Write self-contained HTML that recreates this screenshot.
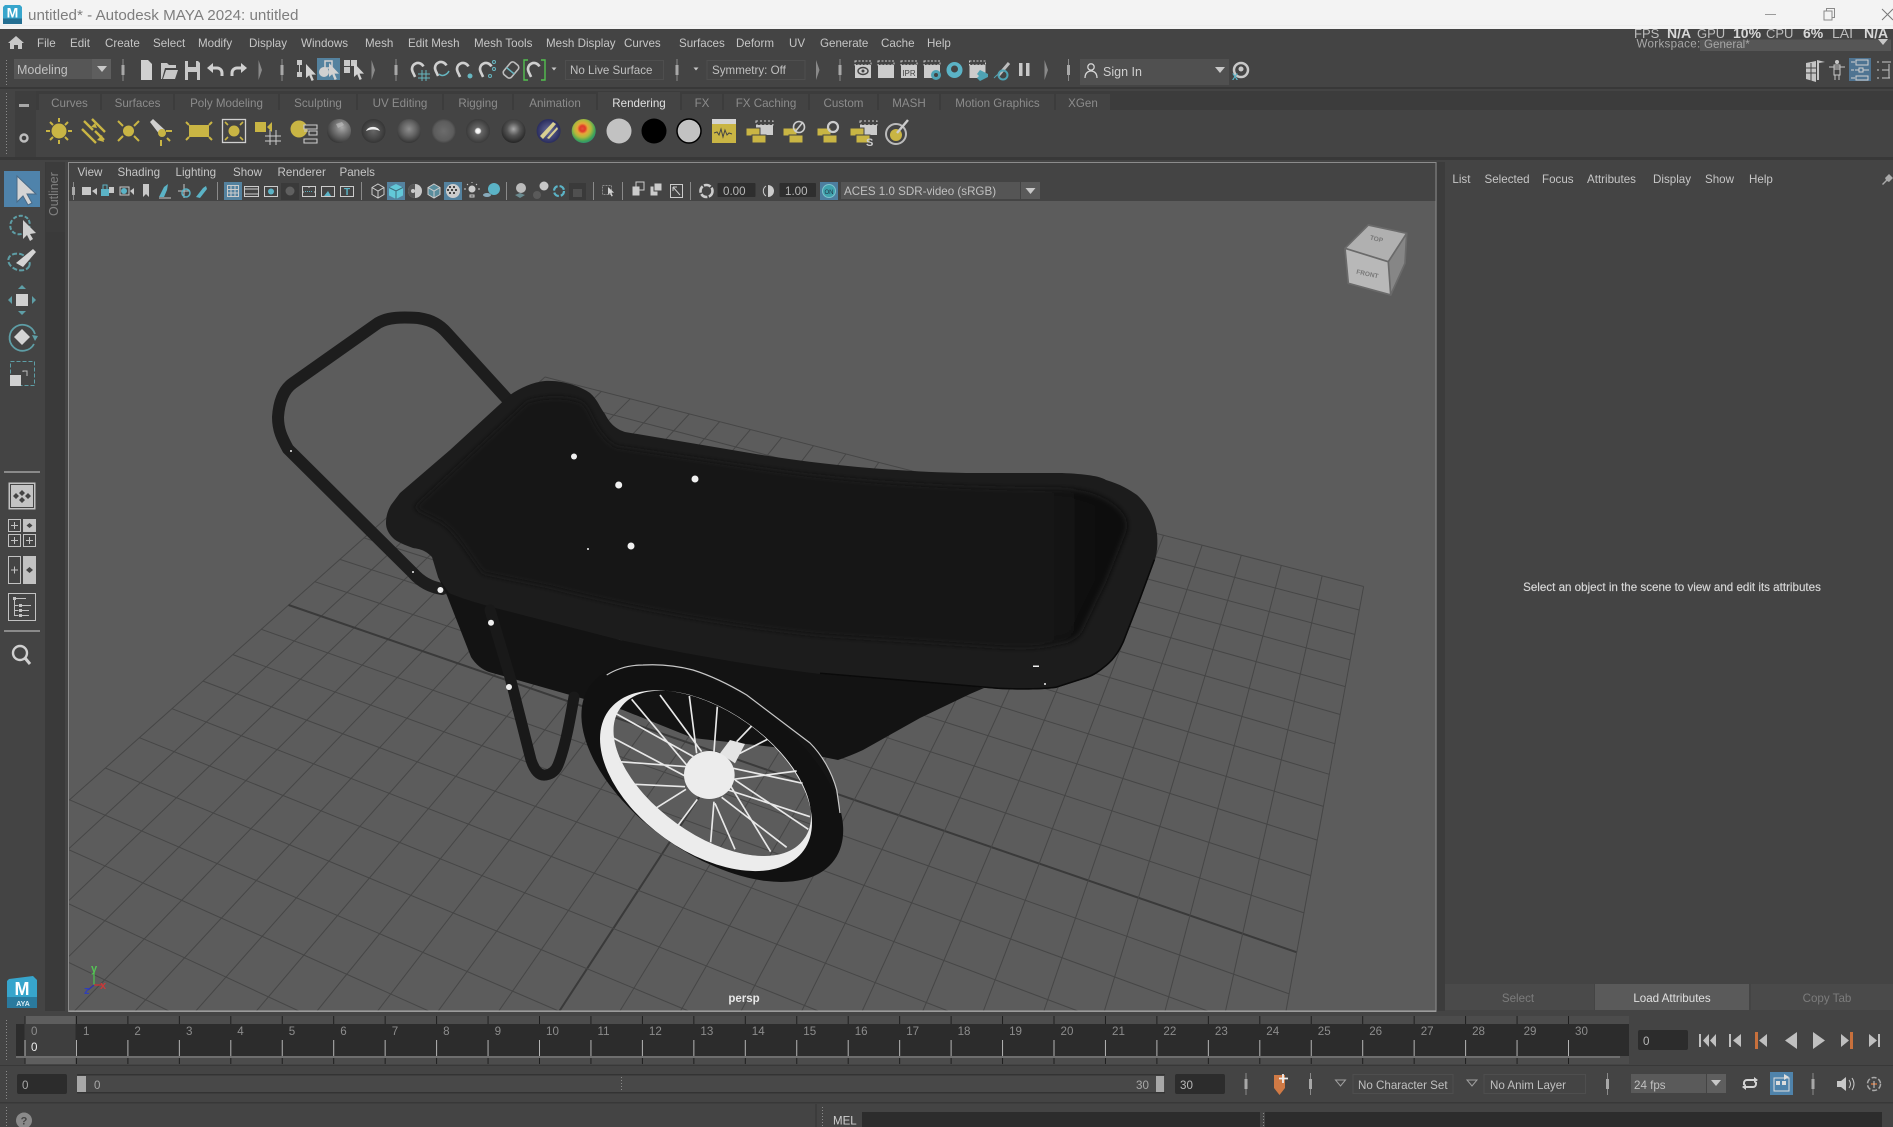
<!DOCTYPE html>
<html><head><meta charset="utf-8"><title>untitled* - Autodesk MAYA 2024: untitled</title>
<style>
html,body{margin:0;padding:0;background:#444;overflow:hidden;width:1893px;height:1127px}
svg{display:block}
text{font-family:"Liberation Sans",sans-serif;font-size:11.6px}
.m{fill:#c6c6c6}.d{fill:#8c8c8c}.b{fill:#bdbdbd}
.tc{text-anchor:middle}
</style></head><body>
<svg xmlns="http://www.w3.org/2000/svg" width="1893" height="1127" viewBox="0 0 1893 1127">
<defs>
<clipPath id="vp"><rect x="69" y="201" width="1367" height="810"/></clipPath>
<clipPath id="rimc"><path d="M545 381C562 380 580 386 590 393C598 400 600 408 605 414C610 424 616 429 625 432L750 453C820 465 900 472 966 473L1062 473C1085 474 1100 476 1106 480C1120 484 1130 490 1137 495C1148 505 1155 518 1157 534C1158 545 1157 552 1155 560L1141 598L1124 642C1118 655 1112 662 1104 668C1098 673 1092 677 1084 679L1056 688C1040 690 1020 690 998 689L820 674C760 667 690 655 620 640L503 610C480 604 460 598 449 593L438 577L432 557C425 550 420 549 413 548C405 545 397 542 393 538C388 533 386 528 386 523C386 516 388 510 391 505L400 493L450 450L510 395C520 388 533 382 545 381Z"/></clipPath>
<filter id="bl2" x="-10%" y="-10%" width="120%" height="120%"><feGaussianBlur stdDeviation="3"/></filter>
<filter id="bl1" x="-10%" y="-10%" width="120%" height="120%"><feGaussianBlur stdDeviation="1"/></filter>
<pattern id="tickL" patternUnits="userSpaceOnUse" x="24.5" y="0" width="51.45" height="20"><rect width="1" height="20" fill="#b4b4b4"/></pattern>
<pattern id="tickD" patternUnits="userSpaceOnUse" x="24.5" y="0" width="51.45" height="20"><rect width="1" height="20" fill="#1e1e1e"/></pattern>
<pattern id="dots" patternUnits="userSpaceOnUse" width="3" height="3"><rect width="1" height="1" fill="#8a8a8a"/></pattern>
<radialGradient id="s1" cx=".62" cy=".35" r=".7"><stop offset="0" stop-color="#aaa"/><stop offset=".4" stop-color="#777"/><stop offset="1" stop-color="#333"/></radialGradient>
<radialGradient id="s2" cx=".5" cy=".5" r=".6"><stop offset="0" stop-color="#666"/><stop offset="1" stop-color="#2c2c2c"/></radialGradient>
<radialGradient id="s3" cx=".5" cy=".42" r=".62"><stop offset="0" stop-color="#8e8e8e"/><stop offset=".5" stop-color="#626262"/><stop offset="1" stop-color="#2e2e2e"/></radialGradient>
<radialGradient id="s4" cx=".5" cy=".5" r=".58"><stop offset="0" stop-color="#6c6c6c"/><stop offset=".7" stop-color="#5c5c5c"/><stop offset="1" stop-color="#363636"/></radialGradient>
<radialGradient id="s5" cx=".5" cy=".5" r=".6"><stop offset="0" stop-color="#fff"/><stop offset=".16" stop-color="#eee"/><stop offset=".25" stop-color="#666"/><stop offset="1" stop-color="#2e2e2e"/></radialGradient>
<radialGradient id="s6" cx=".5" cy=".42" r=".6"><stop offset="0" stop-color="#a8a8a8"/><stop offset=".45" stop-color="#555"/><stop offset="1" stop-color="#222"/></radialGradient>
<radialGradient id="s7" cx=".5" cy=".5" r=".6"><stop offset="0" stop-color="#6a6e9a"/><stop offset="1" stop-color="#1c1f52"/></radialGradient>
<radialGradient id="s8" cx=".45" cy=".4" r=".65"><stop offset="0" stop-color="#e4503a"/><stop offset=".18" stop-color="#e03a28"/><stop offset=".34" stop-color="#e6a63a"/><stop offset=".55" stop-color="#b0b83c"/><stop offset=".8" stop-color="#3fa45a"/><stop offset="1" stop-color="#2a8a7a"/></radialGradient>
<linearGradient id="basin" gradientUnits="userSpaceOnUse" x1="415" y1="0" x2="1128" y2="0"><stop offset="0" stop-color="#121212"/><stop offset=".2" stop-color="#131313"/><stop offset=".3" stop-color="#191919"/><stop offset=".6" stop-color="#171717"/><stop offset=".85" stop-color="#121212"/><stop offset="1" stop-color="#111"/></linearGradient>
<g id="hs"><rect x="-.5" y="-11" width="1" height="22" fill="#8a8a8a"/><rect x="-1.5" y="-5" width="3" height="10" fill="#a8a8a8"/></g>
<path id="tri" d="M-1.5-10V10L2 0Z" fill="#8a8a8a"/>
<path id="cur" d="M0-8V6l3.2-2.8L5.6 9l2.2-1-2.3-5.4H10Z" fill="#d2d2d2"/>
<g id="mag"><path d="M-6 6V0a6 6 0 0 1 12 0" fill="none" stroke="#cfcfcf" stroke-width="2.6" transform="rotate(-25)"/></g>
<path id="dn" d="M-5-3H5L0 3Z" fill="#c8c8c8"/>
<path id="dno" d="M-5-3H5L0 3Z" fill="none" stroke="#a0a0a0"/>
<g id="stk"><rect x="-12" y="-3" width="14" height="8" fill="#c9b544" stroke="#444"/><rect x="-6" y="4" width="14" height="8" fill="#c9b544" stroke="#444"/></g>
<g id="clap"><rect x="-2" y="-10" width="17" height="4" fill="none" stroke="#ccc" stroke-dasharray="2 2"/><rect x="-2" y="-6" width="17" height="10" fill="#ccc"/></g>
<g id="clp"><rect x="-8" y="-10" width="16" height="4" fill="#444" stroke="#ccc" stroke-dasharray="2 1.5"/><rect x="-8" y="-6" width="16" height="13" fill="#ccc"/></g>
</defs>

<rect width="1893" height="1127" fill="#444"/>

<!-- HUD -->
<text x="1634" y="38" style="font-size:13px" fill="#bdbdbd">FPS</text><text x="1667" y="38" style="font-size:14px;font-weight:bold" fill="#d8d8d8">N/A</text>
<text x="1697" y="38" style="font-size:13px" fill="#bdbdbd">GPU</text><text x="1733" y="38" style="font-size:14px;font-weight:bold" fill="#d8d8d8">10%</text>
<text x="1766" y="38" style="font-size:13px" fill="#bdbdbd">CPU</text><text x="1803" y="38" style="font-size:14px;font-weight:bold" fill="#d8d8d8">6%</text>
<text x="1832" y="38" style="font-size:14px" fill="#bdbdbd">LAI</text><text x="1864" y="38" style="font-size:14px;font-weight:bold" fill="#d8d8d8">N/A</text>

<!-- Title bar -->
<rect width="1893" height="29" fill="#f3f3f3"/><rect y="25" width="1893" height="1" fill="#ededed"/>
<g transform="translate(3,5)"><path d="M2 0H17L19 2V19H0V2Z" fill="#37a5cc"/><rect y="13.500" width="19" height="5.500" fill="#256f92"/><text x="9.500" y="12.500" class="tc" style="font-size:14px;font-weight:bold" fill="#fff">M</text></g>
<text x="28" y="20" style="font-size:15.2px" fill="#7e7e7e">untitled* - Autodesk MAYA 2024: untitled</text>
<path d="M1765 14.500h11" stroke="#9a9a9a"/>
<path d="M1824 11h8v9h-8zM1826.500 11V8.500h8v9h-2.500" fill="none" stroke="#8a8a8a"/>
<path d="M1882 9l11 11M1893 9l-11 11" stroke="#777" fill="none"/>

<!-- Menu bar -->
<path d="M8 43l8-7 8 7h-2v6h-4v-4h-4v4h-4v-6z" fill="#c8c8c8"/>
<text class="m" x="37" y="47">File</text><text class="m" x="70" y="47">Edit</text><text class="m" x="105" y="47">Create</text><text class="m" x="153" y="47">Select</text><text class="m" x="198" y="47">Modify</text><text class="m" x="249" y="47">Display</text><text class="m" x="301" y="47">Windows</text><text class="m" x="365" y="47">Mesh</text><text class="m" x="408" y="47">Edit Mesh</text><text class="m" x="474" y="47">Mesh Tools</text><text class="m" x="546" y="47">Mesh Display</text><text class="m" x="624" y="47">Curves</text><text class="m" x="679" y="47">Surfaces</text><text class="m" x="736" y="47">Deform</text><text class="m" x="789" y="47">UV</text><text class="m" x="820" y="47">Generate</text><text class="m" x="881" y="47">Cache</text><text class="m" x="927" y="47">Help</text>
<rect x="1700" y="39.500" width="191" height="11.500" fill="#565656"/>
<text x="1636.500" y="47.500" fill="#a8a8a8" style="letter-spacing:.3px">Workspace:</text>
<text x="1704" y="48" fill="#a8a8a8">General*</text>
<use href="#dn" x="1883" y="42"/>

<!-- Status toolbar -->
<rect x="4" y="59" width="3" height="26" fill="url(#dots)"/>
<rect x="14" y="59" width="97" height="20" fill="#565656"/><rect x="92" y="59" width="19" height="20" fill="#5e5e5e"/>
<text x="17" y="74" style="font-size:12.500px" fill="#c0c0c0">Modeling</text><use href="#dn" x="102" y="69"/>
<use href="#hs" x="123" y="70"/>
<path d="M141 60h7l4 4v16h-11z" fill="#d0d0d0"/>
<path d="M161 79V63h6l2 2h7v3h-11l-3 11zM163 79l3-9h12l-3 9z" fill="#c8c8c8"/>
<path d="M185 61h13l2 2v17h-15z" fill="#c8c8c8"/><rect x="188" y="61" width="8" height="6" fill="#444"/><rect x="188" y="72" width="9" height="8" fill="#444"/>
<path d="M222 76v-3a5 5 0 0 0-5-5h-7" fill="none" stroke="#d0d0d0" stroke-width="3"/><path d="M207 68l6-5v10z" fill="#d0d0d0"/>
<path d="M232 76v-3a5 5 0 0 1 5-5h7" fill="none" stroke="#d0d0d0" stroke-width="3"/><path d="M247 68l-6-5v10z" fill="#d0d0d0"/>
<use href="#tri" x="260" y="70"/><use href="#hs" x="282" y="70"/>
<g fill="#c8c8c8"><rect x="297" y="60" width="5" height="5"/><rect x="297" y="72" width="5" height="5"/><path d="M299 65h1v7h-1z"/></g><use href="#cur" x="306" y="72"/>
<rect x="317" y="58" width="23" height="22" fill="#54829f"/><circle cx="324" cy="72" r="5" fill="#d0d0d0"/><rect x="325" y="61" width="7" height="7" fill="none" stroke="#d0d0d0" stroke-width="1.500"/><use href="#cur" x="329" y="71"/>
<g fill="#c8c8c8"><rect x="344" y="60" width="6" height="6"/><rect x="351" y="60" width="6" height="6"/><rect x="344" y="67" width="6" height="6"/></g><use href="#cur" x="354" y="71"/>
<use href="#tri" x="373" y="70"/><use href="#hs" x="396" y="70"/>
<use href="#mag" x="418" y="69"/><path d="M422 70v11M426 70v11M418 74h12M418 78h12" stroke="#66b6c0" fill="none"/>
<use href="#mag" x="441" y="68"/><path d="M439 74c3 3 8 1 10-3" stroke="#66b6c0" fill="none" stroke-width="1.500"/>
<use href="#mag" x="463" y="69"/><circle cx="470" cy="76" r="2.500" fill="#66b6c0"/>
<use href="#mag" x="486" y="69"/><g fill="none" stroke="#66b6c0"><circle cx="494" cy="62" r="1.500"/><circle cx="494" cy="69" r="1.500"/><circle cx="490" cy="76" r="1.500"/></g>
<g transform="translate(511,70) rotate(40)"><rect x="-5" y="-8" width="10" height="16" rx="3" fill="none" stroke="#bdbdbd" stroke-width="1.600"/><path d="M-5 1h10" stroke="#66b6c0" stroke-width="1.500"/></g>
<path d="M528 60h-4v20h4M541 60h4v20h-4" fill="none" stroke="#53c04f" stroke-width="1.400"/><use href="#mag" x="534" y="69"/>
<path d="M551.500 67.500h5l-2.500 3z" fill="#c8c8c8"/>
<rect x="565.500" y="60.500" width="98" height="19" fill="none" stroke="#4e4e4e"/><text x="570" y="74" fill="#c0c0c0">No Live Surface</text>
<use href="#hs" x="677" y="70"/><path d="M693.500 67.500h5l-2.500 3z" fill="#c8c8c8"/>
<rect x="707" y="60.500" width="98" height="19" fill="none" stroke="#4e4e4e"/><text x="712" y="74" fill="#c0c0c0">Symmetry: Off</text>
<use href="#tri" x="817.500" y="70"/><use href="#hs" x="840" y="70"/>
<use href="#clp" x="863" y="71"/><ellipse cx="863" cy="71" rx="5" ry="3.500" fill="none" stroke="#444" stroke-width="1.400"/><circle cx="863" cy="71" r="1.500" fill="#444"/>
<use href="#clp" x="886" y="71"/>
<use href="#clp" x="909" y="71"/><text x="909" y="76" class="tc" style="font-size:8px" fill="#444">IPR</text>
<use href="#clp" x="932" y="71"/><circle cx="936" cy="75" r="5" fill="#4ea3b4"/><circle cx="936" cy="75" r="2" fill="#444"/>
<circle cx="954.500" cy="70" r="8" fill="#5bb3c6"/><circle cx="954.500" cy="69" r="3.500" fill="#444"/>
<use href="#clp" x="977.500" y="71"/><path d="M980 70l8 4v3l-8 4-3-3 2-2-2-2z" fill="#4ea3b4"/>
<path d="M998 76l11-13" stroke="#bdbdbd" stroke-width="3"/><circle cx="1003" cy="75" r="4.500" fill="none" stroke="#4ea3b4" stroke-width="2"/><path d="M994 78l3-3" stroke="#4ea3b4"/>
<rect x="1019" y="63" width="3.500" height="13" fill="#c8c8c8"/><rect x="1026" y="63" width="3.500" height="13" fill="#c8c8c8"/>
<use href="#tri" x="1046" y="70"/><use href="#hs" x="1068.500" y="70"/>
<rect x="1080" y="59" width="149" height="26" fill="#505050"/>
<circle cx="1091" cy="67" r="3.200" fill="none" stroke="#d4d4d4" stroke-width="1.300"/><path d="M1085 78c0-5 3-7 6-7s6 2 6 7" fill="none" stroke="#d4d4d4" stroke-width="1.300"/>
<text x="1103" y="76" style="font-size:12.500px" fill="#cfcfcf">Sign In</text><use href="#dn" x="1220" y="70"/>
<circle cx="1241" cy="70" r="7" fill="none" stroke="#c8c8c8" stroke-width="2.500"/><circle cx="1241" cy="69" r="2.500" fill="#c8c8c8"/><text x="1232" y="80" style="font-size:9px;font-weight:bold" fill="#5bb3c6">X</text>
<g fill="#c4c4c4"><path d="M1806 63l10-2v21l-10-3zM1817 60l8 2-6 1v17h-2z"/></g>
<path d="M1806 68h10M1806 73h10M1811 63v18" stroke="#444"/>
<g fill="none" stroke="#c8c8c8"><circle cx="1837" cy="62" r="1.500" fill="#c8c8c8"/><path d="M1829 67h16M1834 65h6v10h-6zM1835 75v5M1839 75v5M1834 69h6"/></g>
<rect x="1849" y="58" width="22" height="23" fill="#4f7492"/>
<g fill="none" stroke="#d0d0d0"><path d="M1851 62h4M1856 60h12v5h-12zM1851 70h3M1855 70h4M1863 70h6M1859 68h4v4h-4zM1851 78h4M1856 76h12v4h-12z"/></g>
<g fill="none" stroke="#c8c8c8"><path d="M1877 62h2M1882 62h9M1877 70h2M1882 70h7M1877 78h2M1882 78h8M1889 64v14"/></g>
<rect y="87" width="1893" height="2" fill="#383838"/>

<!-- Tabs and shelf -->
<rect x="4" y="92" width="3" height="62" fill="url(#dots)"/>
<rect x="15" y="91" width="1878" height="19" fill="#3c3c3c"/>
<rect x="15" y="91" width="21" height="66" fill="#3e3e3e"/>
<rect x="36" y="110" width="1857" height="47" fill="#444"/>
<rect x="19" y="104" width="10" height="3" fill="#a8a8a8"/>
<circle cx="24" cy="138" r="3.500" fill="none" stroke="#bdbdbd" stroke-width="2.400"/>
<g fill="#434343">
<rect x="39" y="94" width="61" height="16"/><rect x="102" y="94" width="71" height="16"/><rect x="175" y="94" width="103" height="16"/><rect x="280" y="94" width="76" height="16"/><rect x="358" y="94" width="84" height="16"/><rect x="444" y="94" width="68" height="16"/><rect x="514" y="94" width="82" height="16"/><rect x="682" y="94" width="40" height="16"/><rect x="724" y="94" width="84" height="16"/><rect x="810" y="94" width="67" height="16"/><rect x="879" y="94" width="60" height="16"/><rect x="941" y="94" width="113" height="16"/><rect x="1056" y="94" width="54" height="16"/>
</g>
<rect x="598" y="92" width="82" height="18" fill="#444"/>
<text class="d tc" x="69.500" y="107">Curves</text><text class="d tc" x="137.500" y="107">Surfaces</text><text class="d tc" x="226.500" y="107">Poly Modeling</text><text class="d tc" x="318" y="107">Sculpting</text><text class="d tc" x="400" y="107">UV Editing</text><text class="d tc" x="478" y="107">Rigging</text><text class="d tc" x="555" y="107">Animation</text><text class="d tc" x="702" y="107">FX</text><text class="d tc" x="766" y="107">FX Caching</text><text class="d tc" x="843.500" y="107">Custom</text><text class="d tc" x="909" y="107">MASH</text><text class="d tc" x="997.500" y="107">Motion Graphics</text><text class="d tc" x="1083" y="107">XGen</text>
<text x="639" y="107" class="tc" fill="#e0e0e0">Rendering</text>

<!-- shelf icons -->
<g fill="#c9b544" stroke="none">
<circle cx="59" cy="131" r="7.500"/><g stroke="#c9b544" stroke-width="2" fill="none"><path d="M59 118v4M59 140v4M46 131h4M68 131h4M50 122l3 3M65 137l3 3M68 122l-3 3M53 137l-3 3"/></g>
<g stroke="#c9b544" stroke-width="2.400" fill="none"><path d="M84 121l9 9M82 129l14 14M92 119l13 13M95 131l9 9"/></g><path d="M104 142l-7-2 5-5zM97 128l-6-1 4-4z"/>
<circle cx="128.500" cy="131" r="5.500"/><g stroke="#c9b544" stroke-width="2" fill="none"><path d="M118 121l5 5M134 136l5 5M139 121l-5 5M123 136l-5 5"/></g>
<path d="M153 119l12 11-5 5-10-13z" fill="#d0d0d0"/><path d="M166 131h6M161 140v6M167 138l3 3" stroke="#c9b544" stroke-width="2" fill="none"/><circle cx="162" cy="133" r="4"/>
<rect x="189" y="125" width="20" height="12"/><g stroke="#c9b544" stroke-width="2" fill="none"><path d="M186 122l3 3M212 122l-3 3M186 140l3-3M212 140l-3-3"/></g>
<rect x="222.500" y="119.500" width="23" height="23" fill="none" stroke="#d0d0d0" stroke-width="1.300"/><circle cx="234" cy="131" r="5.500"/><g stroke="#c9b544" stroke-width="1.600" fill="none"><path d="M225 122l3 3M243 122l-3 3M225 140l3-3M243 140l-3-3"/></g>
<path d="M255 122h11v10h-11zM267 127l5-5v10z"/><path d="M270 130v15M265 136h16M265 141h16M276 130v15" stroke="#ccc" fill="none"/>
<circle cx="299" cy="129" r="8.500"/><path d="M304 125h13v4h-13zM304 131h4M309 131h8v4h-8zM304 139h13v4h-13z" fill="#444" stroke="#ccc" stroke-width="1.100"/>
</g>
<circle cx="339" cy="131" r="12" fill="url(#s1)"/><path d="M336 124l6-2 2 3-6 3z" fill="#bbb" opacity=".7"/>
<circle cx="373.500" cy="131" r="12" fill="url(#s2)"/><path d="M366 131c2-5 11-6 14 0-4-2-10-2-14 0z" fill="#eee"/>
<circle cx="409" cy="131" r="12" fill="url(#s3)"/>
<circle cx="443.700" cy="131" r="12" fill="url(#s4)"/>
<circle cx="478" cy="131" r="12" fill="url(#s5)"/>
<circle cx="513.500" cy="131" r="12" fill="url(#s6)"/>
<circle cx="548.600" cy="131" r="12" fill="url(#s7)"/><path d="M540 136l13-14 3 2-13 15z" fill="#d8cf92"/><path d="M547 138l10-11 1 2-9 10z" fill="#d8cf92"/>
<circle cx="583.700" cy="131" r="12" fill="url(#s8)"/>
<circle cx="619" cy="131" r="12.500" fill="#c2c2c2"/>
<circle cx="654" cy="131" r="12.500" fill="#000"/>
<circle cx="689" cy="131" r="12" fill="#c2c2c2" stroke="#000" stroke-width="1.500"/>
<rect x="712" y="119" width="24" height="24" fill="#c9b544"/><rect x="712" y="119" width="24" height="5" fill="#d4d4d4"/><path d="M714 133l3-1 2 3 2-6 2 8 2-7 2 5 2-2 3 1" fill="none" stroke="#444"/>
<use href="#clap" x="758" y="131"/><use href="#stk" x="758" y="131"/>
<use href="#stk" x="795" y="131"/><circle cx="799" cy="127" r="5.500" fill="none" stroke="#ccc" stroke-width="1.600"/><path d="M795 132l8-10" stroke="#ccc" stroke-width="1.600"/>
<use href="#stk" x="829" y="131"/><circle cx="833" cy="127" r="5" fill="none" stroke="#ccc" stroke-width="2.200"/>
<use href="#clap" x="862" y="131"/><use href="#stk" x="862" y="131"/><text x="866" y="146" style="font-size:11px;font-weight:bold" fill="#ccc">S</text>
<circle cx="896" cy="134" r="10" fill="none" stroke="#bbb" stroke-width="2"/><circle cx="896" cy="135" r="6" fill="#c9b544"/><path d="M897 133l11-13" stroke="#ccc" stroke-width="2.400"/>
<rect y="157" width="1893" height="3" fill="#383838"/>

<!-- Left toolbox -->
<rect x="3" y="163" width="38" height="2" fill="url(#dots)"/>
<rect x="4" y="171" width="36" height="36" fill="#4f83ab"/>
<path d="M17 176v26l6-6 5 9 4-2-5-9h9z" fill="#d4d4d4" stroke="#4a6a86"/>
<ellipse cx="20" cy="225" rx="10" ry="9" fill="none" stroke="#5e9ea6" stroke-width="2" stroke-dasharray="4 2" transform="rotate(-30 20 225)"/>
<path d="M23 220v19l4-4 3 6 3-2-3-5 6-1z" fill="#d0d0d0"/>
<ellipse cx="19" cy="262" rx="11" ry="8" fill="none" stroke="#5e9ea6" stroke-width="2" stroke-dasharray="5 2" transform="rotate(20 19 262)"/>
<path d="M16 263l17-14 3 3-13 15z" fill="#d4d4d4"/>
<rect x="16" y="294" width="12" height="12" fill="#d0d0d0"/>
<path d="M22 285l4 4h-8zM22 315l4-4h-8zM8 300l4-4v8zM36 300l-4-4v8z" fill="#5e9ea6"/>
<path d="M34 344a13 13 0 1 1 1-10" fill="none" stroke="#5e9ea6" stroke-width="1.800"/><path d="M38 336l-3 5-3-6z" fill="#5e9ea6"/>
<path d="M22 329l8 8-8 8-8-8z" fill="#d4d4d4"/>
<rect x="10.500" y="361.500" width="24" height="24" fill="none" stroke="#5e9ea6" stroke-dasharray="4 2"/>
<rect x="10" y="375" width="11" height="11" fill="#d0d0d0"/><path d="M23 372v-1h4v5" fill="none" stroke="#bdbdbd"/>
<rect x="4" y="471" width="36" height="2" fill="#8a8a8a"/>
<rect x="8.500" y="482.500" width="27" height="27" fill="#c2c2c2"/><rect x="10.500" y="484.500" width="23" height="23" fill="#c4c4c4" stroke="#444"/>
<path d="M22 490l3 3-3 3-3-3zM16 493l3 3-3 3-3-3zM28 493l3 3-3 3-3-3zM22 497l3 3-3 3-3-3z" fill="#444"/>
<g fill="none" stroke="#c2c2c2"><rect x="8.500" y="519.500" width="12" height="12"/><rect x="8.500" y="534.500" width="12" height="12"/><rect x="23.500" y="534.500" width="12" height="12"/><path d="M11 525.500h7M14.500 522v7M11 540.500h7M14.500 537v7M26 540.500h7M29.500 537v7"/></g>
<rect x="23" y="519" width="13" height="13" fill="#c2c2c2"/><path d="M29.500 523l3 2.500-3 2.500-3-2.500z" fill="#444"/>
<rect x="8.500" y="556.500" width="12" height="27" fill="none" stroke="#c2c2c2"/><path d="M11 570h7M14.500 566.500v7" stroke="#c2c2c2" fill="none"/>
<rect x="23" y="556" width="13" height="28" fill="#c2c2c2"/><path d="M29.500 567l3.500 3-3.500 3-3.500-3z" fill="#444"/>
<rect x="8.500" y="593.500" width="27" height="27" fill="none" stroke="#c2c2c2"/><g fill="#c2c2c2"><rect x="13" y="597" width="3" height="3"/><rect x="19" y="604" width="3" height="3"/><rect x="19" y="609" width="3" height="3"/><rect x="19" y="614" width="3" height="3"/></g><path d="M16 598.500h10M14.500 600v5.500h4M14.500 605v5.500h4M14.500 610v5.500h4M22 605.500h9M22 610.500h7M22 615.500h7" stroke="#c2c2c2" fill="none"/>
<rect x="4" y="630" width="36" height="2" fill="#8a8a8a"/>
<circle cx="20" cy="653" r="7" fill="none" stroke="#d0d0d0" stroke-width="2.400"/><path d="M25 658l5 6" stroke="#d0d0d0" stroke-width="3"/>
<g><path d="M9 979l24-3 4 4v28H7v-27z" fill="#37a5cc"/><rect x="7" y="997" width="30" height="11" fill="#2a7a9e"/><text x="22" y="995" class="tc" style="font-size:18px;font-weight:bold" fill="#fff">M</text><text x="23" y="1006" class="tc" style="font-size:7px;font-weight:bold" fill="#d8ecf4">AYA</text></g>
<rect x="45" y="162" width="20" height="849" fill="#3a3a3a"/>
<rect x="46" y="162" width="19" height="70" fill="#3c3c3c"/>
<text transform="translate(58,216) rotate(-90)" fill="#808080" style="font-size:12.500px">Outliner</text>

<!-- Viewport -->
<rect x="68.500" y="162.500" width="1367.500" height="849" fill="#444" stroke="#8c8c8c"/>
<rect x="69" y="201" width="1366.500" height="810" fill="#5c5c5c"/>
<g clip-path="url(#vp)">
<g id="grid"></g>

<!-- handle -->
<path d="M508 400L447 333C440 325 432 320 418 318C402 317 388 317 378 323L293 383C283 390 279 402 278 417C278 430 282 438 288 449L413 573C420 581 430 587 442 589" fill="none" stroke="#1d1d1d" stroke-width="12" stroke-linecap="round" stroke-linejoin="round"/>

<!-- tub body -->
<path d="M438 577L446 593L471 657Q478 668 489 672L623 710L693 738L773 747L838 760Q850 756 863 750L920 718L970 694L984 688L620 640Z" fill="#131313"/>
<!-- rim -->
<path d="M545 381C562 380 580 386 590 393C598 400 600 408 605 414C610 424 616 429 625 432L750 453C820 465 900 472 966 473L1062 473C1085 474 1100 476 1106 480C1120 484 1130 490 1137 495C1148 505 1155 518 1157 534C1158 545 1157 552 1155 560L1141 598L1124 642C1118 655 1112 662 1104 668C1098 673 1092 677 1084 679L1056 688C1040 690 1020 690 998 689L820 674C760 667 690 655 620 640L503 610C480 604 460 598 449 593L438 577L432 557C425 550 420 549 413 548C405 545 397 542 393 538C388 533 386 528 386 523C386 516 388 510 391 505L400 493L450 450L510 395C520 388 533 382 545 381Z" fill="#1c1c1c"/>
<g clip-path="url(#rimc)">
<!-- basin -->
<path filter="url(#bl2)" d="M527 402C545 396 570 396 583 403C590 410 592 420 597 427C603 437 610 444 617 447L750 467C850 483 960 489 1062 489C1090 490 1108 498 1120 510C1127 518 1128 524 1126 532L1106 581L1081 632C1075 640 1068 642 1060 643C1040 648 1025 648 1000 647L820 635C720 625 620 605 550 587L483 573C470 555 460 540 457 537C450 528 440 520 437 520C430 515 420 513 415 507Z" fill="url(#basin)"/>
<path d="M1155 560L1141 598L1124 642C1118 655 1112 662 1104 668C1098 673 1092 677 1084 679L1056 688C1040 690 1020 690 998 689L820 674" fill="none" stroke="#0a0a0a" stroke-width="3"/>
</g>

<!-- legs -->
<path d="M490 610L510 677L531 760C535 772 540 776 546 775C552 774 556 770 558 765C565 748 570 720 574 697" fill="none" stroke="#191919" stroke-width="11" stroke-linecap="round"/>

<!-- wheel: tire, ring, spokes, hub -->
<path d="M606.700 675C618 668 630 665 643 665C660 664 678 666 693 670C712 676 730 685 746.700 695L810 743C822 755 832 772 836.700 790C838 798 839 806 840 813L810 775L750 715L680 692L620 690Z" fill="#141414"/>
<path fill-rule="evenodd" d="M590.200 685.500A150 81 35.500 1 1 834.400 859.900A150 81 35.500 1 1 590.200 685.500ZM620.600 707.800A112.700 60.700 35.500 1 0 804 838.800A112.700 60.700 35.500 1 0 620.600 707.800Z" fill="#111"/>
<path d="M606.700 675C618 668 630 665 643 665C660 664 678 666 693 670C712 676 730 685 746.700 695L810 743C822 755 832 772 836.700 790C838 798 839 806 840 813" fill="none" stroke="#c8c8c8" stroke-width="1.200"/>
<path fill-rule="evenodd" d="M608.300 711A120 70.700 35.500 1 1 803.700 850.400A120 70.700 35.500 1 1 608.300 711ZM620.600 707.800A112.700 60.700 35.500 1 0 804 838.800A112.700 60.700 35.500 1 0 620.600 707.800Z" fill="#ececec"/>
<g stroke="#e8e8e8" transform="translate(560,640) scale(.3333)" >
<g stroke-width="5">
<path d="M215 178L380 375M300 165L425 335M388 168L410 340M472 200L462 335M575 258L530 305M622 298L530 345M170 222L400 350M152 290L375 408M178 365L380 380M225 433L375 440M290 503L378 448M355 555L412 478M452 607L462 485M525 628L465 490M632 635L510 435M680 622L485 472M745 568L525 420M750 530L505 450M728 430L520 385M710 393L520 418"/>
</g>
<path d="M480 340L510 300L555 312L525 370Z" fill="#e4e4e4" stroke="none"/>
<ellipse cx="448" cy="405" rx="76" ry="72" fill="#ececec" stroke="none"/>
</g>

<!-- specks -->
<g fill="#f0f0f0">
<circle cx="574" cy="456.500" r="3"/><circle cx="618.700" cy="485" r="3.500"/><circle cx="695" cy="479" r="3.500"/><circle cx="631" cy="546" r="3.500"/><circle cx="588" cy="549" r="1"/>
<circle cx="440.400" cy="590" r="3"/><circle cx="491" cy="622.700" r="3"/><circle cx="509" cy="687" r="3"/><circle cx="291" cy="451" r="1"/><circle cx="413" cy="572" r="1"/>
<rect x="1033" y="665.500" width="6" height="1.500"/><circle cx="1045" cy="684" r="1"/>
</g>

<!-- gizmo -->
<path d="M94 985V972" stroke="#4fc04f" stroke-width="1.300"/>
<path d="M94 985L103 985" stroke="#c33" stroke-width="1.300"/><path d="M94 985L88 990" stroke="#33a" stroke-width="1.300"/>
<text x="91" y="972" style="font-size:11px;font-weight:bold" fill="#55c455">y</text>
<text x="100" y="989" style="font-size:11px;font-weight:bold" fill="#c83a3a">x</text>
<text x="84" y="994" style="font-size:11px;font-weight:bold" fill="#2f3fb8">z</text>
<text x="744" y="1002" class="tc" style="font-size:11.500px;font-weight:bold" fill="#e8e8e8">persp</text>

<!-- cube -->
<path d="M1368.300 225L1406.700 233.300L1388.300 261.700L1345 248.300Z" fill="#b0b0b0"/>
<path d="M1345 248.300L1388.300 261.700L1390.700 295L1348.300 283.300Z" fill="#b8b8b8"/>
<path d="M1388.300 261.700L1406.700 233.300L1405 263.300L1390.700 295Z" fill="#868686"/>
<path d="M1368.300 225L1406.700 233.300L1405 263.300L1390.700 295L1348.300 283.300L1345 248.300ZM1345 248.300L1388.300 261.700L1406.700 233.300M1388.300 261.700L1390.700 295" fill="none" stroke="#6a6a6a" stroke-width="1.700"/>
<text x="1376" y="241" class="tc" style="font-size:6.500px;font-weight:bold" fill="#777" transform="rotate(14 1376 241)">TOP</text>
<text x="1367" y="276" class="tc" style="font-size:6.500px;font-weight:bold" fill="#777" transform="rotate(12 1367 276)">FRONT</text>
</g>
<path d="M69 1011H1436" stroke="#a8a8a8"/>

<!-- Viewport menu / panel toolbar -->
<text class="m" x="77.500" y="176">View</text><text class="m" x="117.500" y="176">Shading</text><text class="m" x="175.500" y="176">Lighting</text><text class="m" x="233" y="176">Show</text><text class="m" x="277.500" y="176">Renderer</text><text class="m" x="339.500" y="176">Panels</text>
<rect x="73" y="182" width="1" height="18" fill="#8a8a8a"/><rect x="72" y="187" width="3" height="8" fill="#a8a8a8"/>
<g fill="#c8c8c8">
<rect x="82" y="187" width="9" height="8"/><path d="M92 191l5-3v7z"/>
<rect x="101" y="189" width="8" height="7" fill="#5bb3c6"/><rect x="103" y="185" width="4" height="5" fill="none" stroke="#5bb3c6"/><rect x="109" y="187" width="5" height="6"/>
<rect x="120" y="187" width="9" height="8" fill="none" stroke="#c8c8c8"/><circle cx="124" cy="191" r="3" fill="#5bb3c6"/><path d="M130 191l4-3v7z"/>
<path d="M143 184h6v13l-3-3-3 3z"/>
<path d="M159 197l5-10 4-3-1 6-3 7z" fill="#5bb3c6"/><path d="M159 198h12" stroke="#c8c8c8" fill="none"/>
<path d="M184 184v14M178 191h12" stroke="#c8c8c8" fill="none"/><circle cx="186" cy="193" r="4" fill="none" stroke="#5bb3c6" stroke-width="1.500"/>
<path d="M196 197l7-9 3-2 1 3-7 9z" fill="#5bb3c6"/>
</g>
<rect x="217" y="182" width="1" height="18" fill="#8a8a8a"/>
<rect x="224" y="182" width="18" height="18" fill="#54829f"/>
<g fill="none" stroke="#ccc"><rect x="227.500" y="185.500" width="11" height="11"/><path d="M231 186v10M235 186v10M228 189.500h10M228 193h10"/>
<rect x="244.500" y="186.500" width="14" height="10"/><path d="M245 189h13M245 194h13"/>
<rect x="264.500" y="186.500" width="13" height="10"/></g>
<circle cx="271" cy="191.500" r="3" fill="#5bb3c6"/>
<rect x="281" y="183" width="18" height="17" fill="#3a3a3a"/><circle cx="290" cy="191" r="4.500" fill="#606060"/>
<g fill="none" stroke="#ccc"><rect x="302.500" y="186.500" width="13" height="10"/><path d="M305 191.500h8" stroke-dasharray="1 1" stroke="#5bb3c6"/><path d="M302 192h2M314 192h2M309 186v2"/>
<rect x="321.500" y="186.500" width="13" height="10"/><rect x="340.500" y="186.500" width="13" height="10"/></g>
<path d="M324 196l4-5 3 5z" fill="#5bb3c6"/><text x="347" y="195" class="tc" style="font-size:10px;font-weight:bold" fill="#5bb3c6">T</text>
<rect x="361" y="182" width="1" height="18" fill="#8a8a8a"/>
<g fill="none" stroke="#ccc"><path d="M378 184l6 3.500v7l-6 3.500-6-3.500v-7zM372 187.500l6 3.500 6-3.500M378 191v7"/></g>
<rect x="387" y="182" width="18" height="18" fill="#54829f"/><path d="M396 184l7 3.500v8l-7 3.500-7-3.500v-8z" fill="#62c8d8"/><path d="M389 187.500l7 3.500 7-3.500M396 191v8" stroke="#3d6a7a" fill="none"/>
<circle cx="415" cy="191" r="7" fill="#c8c8c8"/><path d="M415 184a7 7 0 0 0 0 14z" fill="#555"/><circle cx="413" cy="191" r="2" fill="#ccc"/>
<path d="M434 184l6 3.500v7l-6 3.500-6-3.500v-7z" fill="#5a8d9c" stroke="#ccc"/><path d="M428 187.500l6 3.500 6-3.500M434 191v7" stroke="#ccc" fill="none"/>
<rect x="444" y="182" width="18" height="18" fill="#54829f"/><circle cx="453" cy="191" r="7" fill="#ccc"/><g fill="#444"><rect x="449" y="186" width="2" height="2"/><rect x="453" y="186" width="2" height="2"/><rect x="447" y="189" width="2" height="2"/><rect x="451" y="189" width="2" height="2"/><rect x="455" y="189" width="2" height="2"/><rect x="449" y="192" width="2" height="2"/><rect x="453" y="192" width="2" height="2"/></g>
<circle cx="472" cy="189" r="3.500" fill="#ccc"/><path d="M472 183v-1M466 189h-2M480 189h-2M467 184l1 1M477 184l-1 1M470 195h4v2h-4z" stroke="#ccc" fill="none"/>
<circle cx="494" cy="189" r="6" fill="#5bb3c6"/><ellipse cx="487" cy="195" rx="4" ry="2" fill="#8ab"/>
<rect x="506" y="182" width="1" height="18" fill="#8a8a8a"/>
<circle cx="521" cy="188" r="5" fill="#bbb"/><path d="M515 195l5-2 5 2-5 3z" fill="#6a8a8f"/>
<circle cx="544" cy="186" r="4.500" fill="#c8c8c8"/><circle cx="537" cy="195" r="4" fill="#5a5a5a"/>
<circle cx="559" cy="191" r="5" fill="none" stroke="#5bb3c6" stroke-width="2.200" stroke-dasharray="6 2"/>
<rect x="569" y="183" width="17" height="17" fill="#3a3a3a"/><rect x="573" y="189" width="9" height="8" fill="#505050"/>
<rect x="593" y="182" width="1" height="18" fill="#8a8a8a"/>
<rect x="602.500" y="185.500" width="9" height="9" fill="none" stroke="#8a8a8a" stroke-dasharray="2 1"/><path d="M608 187v8l2-2 1.500 3.500 1.300-.6-1.500-3.300h2.800z" fill="#d2d2d2"/>
<rect x="622" y="182" width="1" height="18" fill="#8a8a8a"/>
<rect x="632" y="186" width="8" height="10" fill="#ccc" stroke="#444"/><rect x="636" y="182" width="8" height="8" fill="none" stroke="#ccc"/>
<rect x="650" y="186" width="8" height="10" fill="#ccc" stroke="#444"/><rect x="654" y="183" width="8" height="8" fill="#ccc" stroke="#444"/>
<rect x="670.500" y="184.500" width="12" height="13" fill="none" stroke="#ccc"/><path d="M673 187l7 8M673 187h4M673 187v4" stroke="#ccc" fill="none"/>
<rect x="690" y="182" width="1" height="18" fill="#8a8a8a"/>
<circle cx="706.500" cy="191" r="6" fill="none" stroke="#ccc" stroke-width="2.600" stroke-dasharray="7 1.500"/>
<rect x="717.500" y="183" width="38" height="14" rx="1" fill="#2e2e2e"/><text x="723" y="195" fill="#b8b8b8">0.00</text>
<path d="M768 185a6 6 0 0 1 0 12z" fill="#ccc"/><path d="M766 186a6 6 0 0 0 0 10" fill="none" stroke="#ccc"/>
<rect x="779.500" y="183" width="36.500" height="14" rx="1" fill="#2e2e2e"/><text x="785" y="195" fill="#b8b8b8">1.00</text>
<rect x="820" y="182" width="18" height="18" fill="#4d7e9f"/><circle cx="829" cy="191" r="6.500" fill="#3fa2ad" stroke="#7cc4cc"/><text x="829" y="194" class="tc" style="font-size:6px" fill="#234">ON</text>
<rect x="841" y="182" width="179" height="17" fill="#555"/><rect x="1021" y="182" width="19" height="17" fill="#5a5a5a"/>
<text x="844" y="195" fill="#c0c0c0">ACES 1.0 SDR-video (sRGB)</text><use href="#dn" x="1030.500" y="191"/>

<!-- Attribute editor panel -->
<rect x="1437" y="162" width="9" height="849" fill="#3c3c3c"/>
<rect x="1445" y="160" width="448" height="851" fill="#444"/>
<text class="m" x="1452.400" y="183">List</text><text class="m" x="1484.500" y="183">Selected</text><text class="m" x="1542" y="183">Focus</text><text class="m" x="1587" y="183">Attributes</text><text class="m" x="1653" y="183">Display</text><text class="m" x="1705" y="183">Show</text><text class="m" x="1749" y="183">Help</text>
<path d="M1882 184l4-4-1-2 4-4 4 4-4 4-2-1-4 4z" fill="#aaa"/>
<text x="1672" y="591" class="tc" fill="#d8d8d8" stroke="#d8d8d8" stroke-width=".15">Select an object in the scene to view and edit its attributes</text>
<rect x="1445" y="984" width="149" height="26" fill="#4a4a4a"/><rect x="1595" y="984" width="154" height="26" fill="#5a5a5a"/><rect x="1751" y="984" width="142" height="26" fill="#4a4a4a"/>
<text x="1518" y="1002" class="tc" fill="#7c7c7c">Select</text><text x="1672" y="1002" class="tc" fill="#e0e0e0">Load Attributes</text><text x="1827" y="1002" class="tc" fill="#7c7c7c">Copy Tab</text>

<!-- Timeline -->
<rect x="4" y="1020" width="3" height="42" fill="url(#dots)"/>
<rect x="24" y="1016" width="1605" height="8" fill="#4c4c4c"/>
<rect x="24" y="1056" width="1605" height="8" fill="#4c4c4c"/>
<rect x="16" y="1024" width="1613" height="32" fill="#2c2c2c"/>
<rect x="24.500" y="1016" width="51" height="8" fill="#5e5e5e"/><rect x="24.500" y="1024" width="51" height="32" fill="#3e3e3e"/><rect x="24.500" y="1056" width="51" height="8" fill="#5e5e5e"/>
<rect x="16" y="1056" width="1604" height="2" fill="#6e6e6e"/>
<rect x="24.500" y="1016" width="1545" height="8" fill="url(#tickD)"/>
<rect x="24.500" y="1058" width="1545" height="6" fill="url(#tickD)"/>
<rect x="24.500" y="1040" width="1545" height="16" fill="url(#tickL)"/>
<text class="d" x="31" y="1035">0</text><text class="d" x="83" y="1035">1</text><text class="d" x="134.400" y="1035">2</text><text class="d" x="186" y="1035">3</text><text class="d" x="237.300" y="1035">4</text><text class="d" x="288.800" y="1035">5</text><text class="d" x="340.200" y="1035">6</text><text class="d" x="391.700" y="1035">7</text><text class="d" x="443.100" y="1035">8</text><text class="d" x="494.600" y="1035">9</text><text class="d" x="546" y="1035">10</text><text class="d" x="597.500" y="1035">11</text><text class="d" x="648.900" y="1035">12</text><text class="d" x="700.400" y="1035">13</text><text class="d" x="751.800" y="1035">14</text><text class="d" x="803.300" y="1035">15</text><text class="d" x="854.700" y="1035">16</text><text class="d" x="906.200" y="1035">17</text><text class="d" x="957.600" y="1035">18</text><text class="d" x="1009.100" y="1035">19</text><text class="d" x="1060.500" y="1035">20</text><text class="d" x="1112" y="1035">21</text><text class="d" x="1163.400" y="1035">22</text><text class="d" x="1214.900" y="1035">23</text><text class="d" x="1266.300" y="1035">24</text><text class="d" x="1317.800" y="1035">25</text><text class="d" x="1369.200" y="1035">26</text><text class="d" x="1420.700" y="1035">27</text><text class="d" x="1472.100" y="1035">28</text><text class="d" x="1523.600" y="1035">29</text><text class="d" x="1575" y="1035">30</text>
<text x="31" y="1051" fill="#eee">0</text>
<rect x="1638" y="1030" width="50" height="20" rx="2" fill="#2c2c2c"/><text x="1643" y="1045" fill="#b8b8b8">0</text>
<g fill="#c0c0c0">
<path d="M1699 1034h2v13h-2zM1709 1034v13l-6-6.500zM1716 1034v13l-6-6.500z"/>
<path d="M1729 1034h2v13h-2zM1741 1034v13l-8-6.500z"/>
<rect x="1755" y="1032" width="3" height="17" fill="#c8703c"/><path d="M1767 1034v13l-8-6.500z"/>
<path d="M1797 1032v17l-12-8.500z"/>
<path d="M1813 1032v17l12-8.500z"/>
<path d="M1841 1034v13l8-6.500z"/><rect x="1850" y="1032" width="3" height="17" fill="#c8703c"/>
<path d="M1869 1034v13l8-6.500zM1878 1034h2v13h-2z"/>
</g>
<rect y="1065" width="1893" height="1" fill="#383838"/>

<!-- Range slider -->
<rect x="4" y="1071" width="3" height="30" fill="url(#dots)"/>
<rect x="17" y="1074" width="50" height="20" rx="2" fill="#2c2c2c"/><text x="22" y="1089" fill="#a8a8a8">0</text>
<rect x="77" y="1074" width="1088" height="19" fill="#484848"/>
<rect x="77" y="1074" width="1088" height="1.500" fill="#333"/><rect x="77" y="1092" width="1088" height="1.500" fill="#333"/>
<rect x="77" y="1076" width="9" height="16" fill="#a8a8a8"/><text x="94" y="1089" fill="#a8a8a8">0</text>
<rect x="619" y="1077" width="3" height="14" fill="url(#dots)"/>
<text x="1136" y="1089" fill="#a8a8a8">30</text><rect x="1156" y="1076" width="8" height="16" fill="#a8a8a8"/>
<rect x="1175" y="1074" width="50" height="20" rx="2" fill="#2c2c2c"/><text x="1180" y="1089" fill="#b8b8b8">30</text>
<use href="#hs" x="1246" y="1084"/>
<path d="M1274 1075h11v13l-5.500 7-5.500-7z" fill="#d07a45"/><path d="M1283 1074v9M1279 1078.500h9" stroke="#eee" stroke-width="1.800"/>
<use href="#hs" x="1310.500" y="1084"/>
<use href="#dno" x="1340.500" y="1083"/>
<rect x="1353" y="1074.500" width="100" height="19" fill="none" stroke="#4e4e4e"/><text x="1358" y="1089" fill="#c0c0c0">No Character Set</text>
<use href="#dno" x="1472" y="1083"/>
<rect x="1484" y="1074.500" width="101.500" height="19" fill="none" stroke="#4e4e4e"/><text x="1490" y="1089" fill="#c0c0c0">No Anim Layer</text>
<use href="#hs" x="1607.500" y="1084"/>
<rect x="1631" y="1074" width="75" height="19" fill="#5a5a5a"/><rect x="1707" y="1074" width="19" height="19" fill="#5e5e5e"/><text x="1634" y="1089" fill="#c0c0c0">24 fps</text><use href="#dn" x="1716" y="1083"/>
<path d="M1744 1085v-2a3 3 0 0 1 3-3h9M1756 1082v2a3 3 0 0 1-3 3h-9" fill="none" stroke="#d4d4d4" stroke-width="2"/><path d="M1754 1077l4 3-4 3zM1746 1084l-4 3 4 3z" fill="#d4d4d4"/>
<rect x="1770" y="1072" width="23" height="23" fill="#4f83ab"/><rect x="1774" y="1078" width="15" height="13" fill="none" stroke="#ddd"/><rect x="1776" y="1081" width="4" height="4" fill="#ddd"/><rect x="1782" y="1081" width="4" height="4" fill="#ddd"/><path d="M1784 1074l5 3-5 3z" fill="#ddd"/>
<use href="#hs" x="1813" y="1084"/>
<path d="M1837 1081h4l5-4v14l-5-4h-4z" fill="#c8c8c8"/><path d="M1849 1080q3 4 0 8M1852 1078q4 6 0 12" fill="none" stroke="#c8c8c8"/>
<circle cx="1874" cy="1084" r="6.500" fill="none" stroke="#aaa" stroke-width="1.500" stroke-dasharray="5 2"/><path d="M1871 1084h6" stroke="#c8703c" stroke-width="1.500"/><path d="M1874 1081v7" stroke="#ccc"/>
<rect y="1102" width="1893" height="1.500" fill="#383838"/>

<!-- Command line -->
<rect x="4" y="1106" width="3" height="21" fill="url(#dots)"/>
<path d="M19.340 1127A8 8 0 1 1 28.660 1127Z" fill="#8a8a8a"/><text x="24" y="1124.500" class="tc" style="font-size:11px;font-weight:bold" fill="#444">?</text>
<rect x="815" y="1104" width="2" height="23" fill="#3c3c3c"/>
<rect x="820" y="1106" width="3" height="21" fill="url(#dots)"/>
<text x="833" y="1124.500" fill="#cfcfcf" style="font-size:11.500px">MEL</text>
<rect x="862" y="1112" width="398" height="15" fill="#2c2c2c"/><rect x="1265" y="1112" width="617" height="15" fill="#2c2c2c"/>
<rect x="1262" y="1112" width="2" height="15" fill="url(#dots)"/>
</svg>
<script>
(function(){
var g=document.getElementById('grid'),N='http://www.w3.org/2000/svg',X0=69,X1=1436,Y0=201,Y1=1011;
function P(s,t){var w=-.2004*s-.18644*t+1;return[(-314.24*s+564.37*t+545)/w,(106.76*s+100.15*t+377)/w]}
function L(a,b,th){
 var dx=b[0]-a[0],dy=b[1]-a[1],t0=0,t1=1,p=[-dx,dx,-dy,dy],q=[a[0]-X0,X1-a[0],a[1]-Y0,Y1-a[1]];
 for(var k=0;k<4;k++){if(p[k]==0){if(q[k]<0)return}else{var r=q[k]/p[k];if(p[k]<0){if(r>t1)return;if(r>t0)t0=r}else{if(r<t0)return;if(r<t1)t1=r}}}
 var l=document.createElementNS(N,'line');
 l.setAttribute('x1',(a[0]+t0*dx).toFixed(1));l.setAttribute('y1',(a[1]+t0*dy).toFixed(1));l.setAttribute('x2',(a[0]+t1*dx).toFixed(1));l.setAttribute('y2',(a[1]+t1*dy).toFixed(1));
 l.setAttribute('stroke',th?'#3a3a3a':'#464646');l.setAttribute('stroke-width',th?2:1);g.appendChild(l)}
for(var i=0;i<=24;i++){L(P(i/12,0),P(i/12,1),i==12);L(P(0,i/24),P(2,i/24),i==12)}
})();
</script>
</body></html>
